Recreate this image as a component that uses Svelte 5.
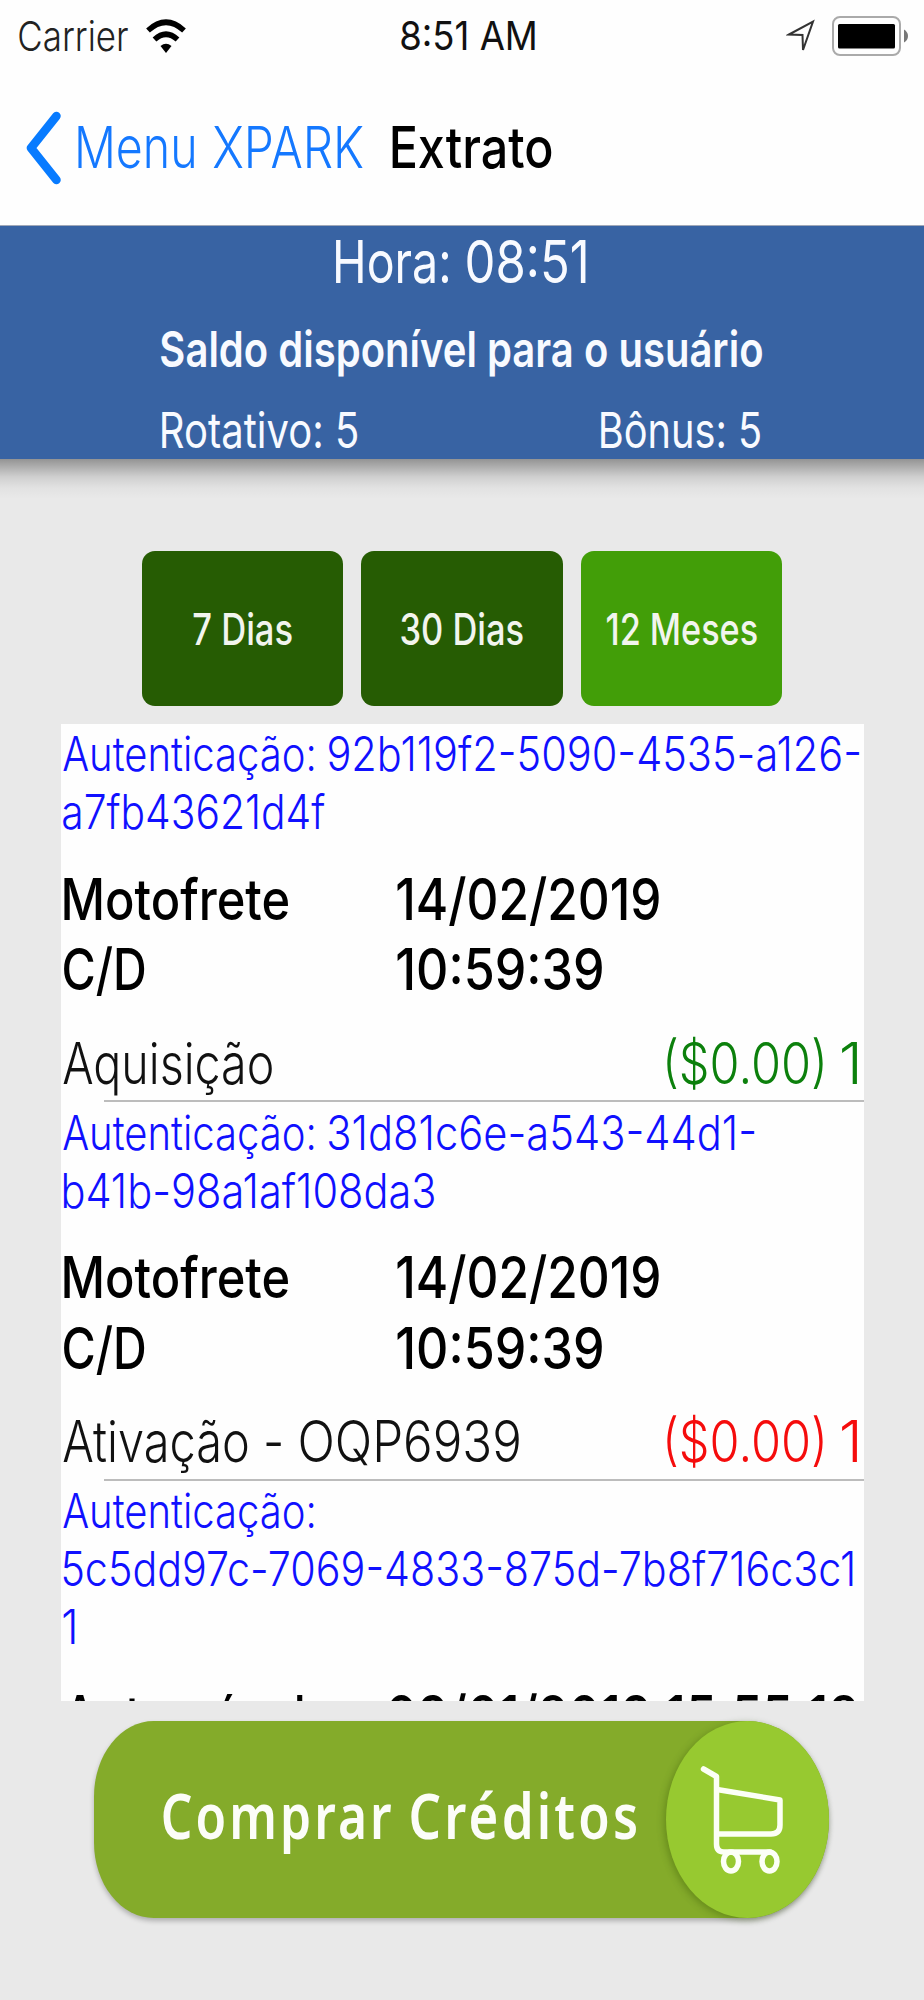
<script>
  const periods = [
    { label: '7 Dias', left: 50.6, width: 99 },
    { label: '30 Dias', left: 40, width: 122 },
    { label: '12 Meses', left: 26, width: 150, active: true },
  ];

  // Every piece of text is a [text, ink width] pair; a line is a list of them.
  const records = [
    {
      auth: [[['Autenticação:', 251], ['92b119f2-5090-4535-a126-', 530]], [['a7fb43621d4f', 262]]],
      kind: [['Motofrete', 224], ['C/D', 81]],
      when: [['14/02/2019', 262], ['10:59:39', 205]],
      whenLeft: 335.5,
      action: [['Aquisição', 209]],
      amount: [['($0.00)', 156], ['1', 15]],
      tone: 'credit',
    },
    {
      auth: [[['Autenticação:', 251], ['31d81c6e-a543-44d1-', 425]], [['b41b-98a1af108da3', 371]]],
      kind: [['Motofrete', 224], ['C/D', 81]],
      when: [['14/02/2019', 262], ['10:59:39', 205]],
      whenLeft: 335.5,
      action: [['Ativação -', 218], ['OQP6939', 219]],
      amount: [['($0.00)', 156], ['1', 15]],
      tone: 'debit',
    },
    {
      auth: [[['Autenticação:', 251]], [['5c5dd97c-7069-4833-875d-7b8f716c3c1', 790]], [['1', 12]]],
      kind: [['Automóvel', 239]],
      when: [['09/01/2019 15:55:18', 469]],
      whenLeft: 327,
    },
  ];

  // Condenses a run of text so that its ink spans exactly the given width.
  function condense(node, width) {
    const css = getComputedStyle(node);
    const ctx = document.createElement('canvas').getContext('2d');
    ctx.font = `${css.fontWeight} ${css.fontSize} ${css.fontFamily}`;
    if (css.letterSpacing !== 'normal') ctx.letterSpacing = css.letterSpacing;
    const m = ctx.measureText(node.textContent);
    const spacing = parseFloat(css.letterSpacing) || 0;
    const ink = m.actualBoundingBoxRight + m.actualBoundingBoxLeft - (m.actualBoundingBoxRight > m.width - spacing ? spacing : 0);
    const scale = width / ink;
    node.style.transform = `translateX(${m.actualBoundingBoxLeft * scale}px) scaleX(${scale})`;
  }
</script>

{#snippet run(text, width)}
  <span class="run" style="width:{width}px"><span class="ink" use:condense={width}>{text}</span></span>
{/snippet}

{#snippet line(parts, gap)}
  <span class="parts" style="gap:{gap}px">
    {#each parts as [t, w]}{@render run(t, w)}{/each}
  </span>
{/snippet}

<div class="screen">
  <header>
    <div class="status">
      <div class="carrier">
        {@render run('Carrier', 109)}
        <svg width="40" height="35" viewBox="0 0 40 35" fill="none" stroke="#000">
          <path d="M2 11.5Q20-5 38 11.5" stroke-width="5.5" />
          <path d="M8.500 20.500Q20 10 31.500 20.500" stroke-width="5.500" />
          <path d="M14.500 27Q20 22.500 25.500 27L20 34Z" fill="#000" stroke="none" />
        </svg>
      </div>
      <div class="clock">{@render run('8:51 AM', 134)}</div>
      <div class="indicators">
        <svg width="30" height="36" viewBox="0 0 30 36" fill="none" stroke="#333" stroke-width="2">
          <path d="M3 16.500 27 3.500 17 32 16.500 17Z" />
        </svg>
        <svg width="77" height="42" viewBox="0 0 77 42">
          <rect x="1" y="2" width="67" height="38" rx="7" fill="none" stroke="#aaa" stroke-width="2" />
          <rect x="6" y="9" width="57" height="24.500" rx="1.500" />
          <path d="M72 14.500Q76 17 76 21T72 27.500Z" fill="#777" />
        </svg>
      </div>
    </div>
    <nav>
      <svg width="36" height="74" viewBox="0 0 36 74" fill="none" stroke="#087bff" stroke-width="8.500" stroke-linecap="round" stroke-linejoin="round">
        <path d="M31.500 5 6 37 31.500 69" />
      </svg>
      <span class="back">{@render line([['Menu', 116.5], ['XPARK', 150]], 18)}</span>
      <span class="title">{@render run('Extrato', 160)}</span>
    </nav>
  </header>

  <section class="banner">
    <div class="hour">{@render line([['Hora:', 112.5], ['08:51', 118.5]], 18.5)}</div>
    <div class="balance">{@render run('Saldo disponível para o usuário', 601)}</div>
    <div class="totals">
      {@render run('Rotativo: 5', 195)}
      {@render run('Bônus: 5', 159)}
    </div>
  </section>

  <main>
    <div class="periods">
      {#each periods as p}
        <button class:active={p.active} style="padding-left:{p.left}px">{@render run(p.label, p.width)}</button>
      {/each}
    </div>

    <div class="list">
      {#each records as r}
        <article>
          <div class="auth">
            {#each r.auth as parts}<div>{@render line(parts, 15.5)}</div>{/each}
          </div>
          <div class="detail" style="grid-template-columns:{r.whenLeft}px 1fr">
            <div>{#each r.kind as [t, w]}<div class="line kind">{@render run(t, w)}</div>{/each}</div>
            <div>{#each r.when as [t, w]}<div class="line">{@render run(t, w)}</div>{/each}</div>
          </div>
          {#if r.action}
            <div class="movement">
              {@render line(r.action, 18.5)}
              <span class={r.tone}>{@render line(r.amount, 19)}</span>
            </div>
            <hr />
          {/if}
        </article>
      {/each}
    </div>

    <button class="buy">
      <span class="label">{@render line([['Comprar', 228], ['Créditos', 225]], 20)}</span>
      <span class="cart">
        <svg width="163" height="198" viewBox="0 0 163 198" fill="none" stroke="#fcfff6" stroke-width="5.500" stroke-linecap="round" stroke-linejoin="round">
          <path d="M37.500 48 50.500 55.500V123Q50.500 131 58 131H104" />
          <path d="M51 68.500 114 79V104Q114 113 105 113H51" />
          <ellipse cx="65" cy="140.500" rx="7.500" ry="9.500" />
          <ellipse cx="103.500" cy="140.500" rx="7.500" ry="9.500" />
        </svg>
      </span>
    </button>
  </main>
</div>

<style>
  :global(body) { margin: 0; background: #e9e9e9; }
  .screen {
    width: 924px;
    height: 2000px;
    overflow: hidden;
    display: flex;
    flex-direction: column;
    background: #e9e9e9;
    font-family: Inter, "Liberation Sans", sans-serif;
  }
  .run { display: inline-block; white-space: nowrap; flex: none; text-align: left; }
  .ink { display: inline-block; transform-origin: 0 50%; }
  .parts { display: flex; }
  svg { display: block; flex: none; }

  header {
    height: 226px;
    box-sizing: border-box;
    background: #fefefe;
    border-bottom: 1px solid #a0a8b8;
  }
  .status {
    height: 72px;
    display: grid;
    grid-template-columns: 401px 1fr 138px;
    align-items: center;
    line-height: 72px;
  }
  .carrier { display: flex; align-items: center; gap: 18px; padding-left: 19px; font-size: 41px; font-weight: 300; color: #222; }
  .clock { font-size: 40px; font-weight: 400; color: #111; }
  .indicators { display: flex; align-items: center; gap: 16px; }
  nav { height: 151px; display: flex; align-items: center; padding-left: 25px; font-size: 57.5px; line-height: 151px; }
  .back { margin-left: 17px; color: #1478ff; font-weight: 350; }
  .title { margin-left: 29px; color: #000; font-weight: 450; }

  .banner {
    position: relative;
    height: 233px;
    display: flex;
    flex-direction: column;
    background: #3863a3;
    color: #f8faff;
  }
  .banner::after {
    content: "";
    position: absolute;
    top: 100%;
    left: 0;
    right: 0;
    height: 40px;
    background: linear-gradient(rgba(0, 0, 0, .37), rgba(0, 0, 0, .25) 20%, rgba(0, 0, 0, .11) 45%, rgba(0, 0, 0, .03) 72%, transparent);
  }
  .hour { height: 71px; line-height: 71px; font-size: 59px; padding-left: 336px; }
  .balance { height: 106px; line-height: 106px; font-size: 49px; font-weight: 600; padding-left: 161px; }
  .totals { display: flex; justify-content: space-between; padding: 0 164px 0 162px; height: 56px; line-height: 56px; font-size: 49px; }

  main { display: flex; flex-direction: column; }
  button { border: 0; margin: 0; padding: 0; font-family: inherit; text-align: left; }
  .periods { display: flex; gap: 18px; padding: 92px 0 0 142px; }
  .periods button {
    width: 201.3px;
    height: 154.5px;
    box-sizing: border-box;
    border-radius: 13px;
    background: #265c03;
    color: #f2f5ee;
    font-size: 43.5px;
    font-weight: 450;
    line-height: 156px;
  }
  .periods button.active { background: #429e08; }

  .list {
    margin: 18px 0 0 61px;
    width: 802.5px;
    height: 977px;
    overflow: hidden;
    background: #fefefe;
  }
  article { padding-top: 1.5px; }
  article:last-child .detail { margin-top: 26px; }
  .auth { padding-left: 1.5px; font-size: 47.5px; line-height: 58px; font-weight: 350; color: #1010ff; }
  .auth div { height: 58px; }
  .detail { display: grid; margin-top: 23.75px; font-size: 57px; font-weight: 450; color: #000; }
  .line { height: 70.5px; line-height: 70.5px; }
  .kind { padding-left: 3px; }
  .movement {
    display: flex;
    justify-content: space-between;
    height: 70px;
    margin-top: 22.75px;
    padding: 0 6.5px 0 2px;
    line-height: 70px;
    font-size: 57px;
    font-weight: 350;
    color: #111;
  }
  .credit { color: #0c800c; }
  .debit { color: #f50c0c; }
  hr { border: 0; height: 2px; margin: 1.5px 0 0 43px; background: #bcbcbc; }

  .buy {
    display: flex;
    margin: 20px 0 0 94px;
    width: 735px;
    height: 197.5px;
    border-radius: 60px 82px 82px 60px / 76px 99px 99px 76px;
    background: #84ab2a;
    box-shadow: 0 3px 5px rgba(0, 0, 0, .25);
    color: #fcfdf8;
  }
  .label {
    width: 572px;
    padding-left: 69px;
    box-sizing: border-box;
    font-family: "Noto Sans", sans-serif;
    font-size: 64px;
    font-weight: 600;
    letter-spacing: 4px;
    line-height: 188px;
  }
  .cart {
    width: 163px;
    height: 197.5px;
    border-radius: 50%;
    background: #97c930;
    box-shadow: -2px 2px 7px rgba(50, 80, 0, .35);
  }
</style>
